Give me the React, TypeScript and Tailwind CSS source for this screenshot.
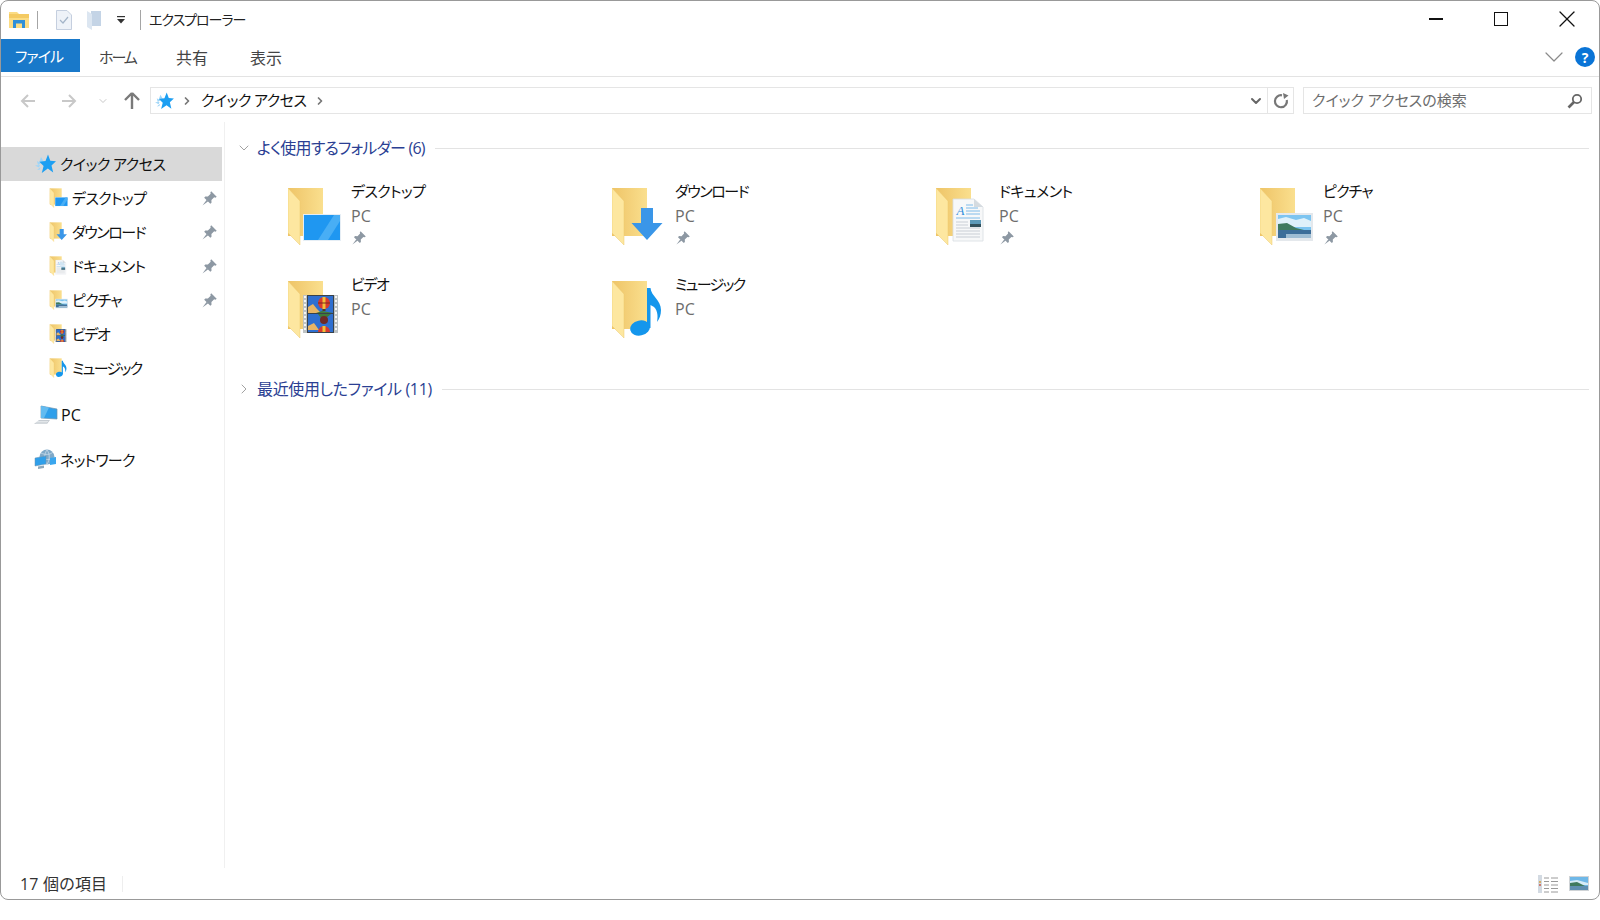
import type { ReactNode } from "react"
import { ChevronDown, ChevronRight, X } from "lucide-react"

type Kind = "desktop" | "download" | "document" | "picture" | "video" | "music"

const Pin = ({ className = "" }: { className?: string }) => (
  <svg viewBox="0 0 16 16" className={className}>
    <path d="M9.6 1.2 14.8 6.4 13.6 7.2 12.4 6.9 9.8 9.5 9.9 12 8.8 13 3 7.2 4 6.1 6.5 6.2 9.1 3.6 8.8 2.4Z" fill="#8d98a3" />
    <path d="M5.4 9.2 1.4 14.6 6.8 10.6Z" fill="#8d98a3" />
  </svg>
)

const Star = ({ className = "" }: { className?: string }) => (
  <svg viewBox="0 0 22 20" className={className}>
    <path d="M7 3 10 8 5 9ZM3 7 7 9.500 4 11ZM1 11.500 6 11 5 13.500ZM3 16 6.500 13 6 15.500Z" fill="#9ed5f8" />
    <path d="M14 0.500 16.300 6.800 22 7.200 17.500 11.400 19.200 18.500 13.800 14.600 7.800 19 9.600 12 5.400 7.800 11.500 7Z" fill="#1d9ff2" />
  </svg>
)

function Overlay({ kind }: { kind: Kind }) {
  if (kind === "desktop") {
    return (
      <g>
        <rect x="15" y="27" width="38" height="27" fill="#e6eef5" />
        <rect x="16" y="28" width="36" height="25" fill="#1f97f1" />
        <path d="M30 53 46 28H52V34L40 53Z" fill="#48aef5" />
      </g>
    )
  }
  if (kind === "download") {
    return <path d="M29 21H41V36H50.5L35 53 19.5 36H29Z" fill="#3a96e8" />
  }
  if (kind === "document") {
    return (
      <g>
        <path d="M17 12H38L47 20V54H17Z" fill="#f7f8f9" stroke="#d8dde2" strokeWidth="0.8" />
        <path d="M38 12V20H47Z" fill="#d5dbe0" />
        <text x="20.500" y="28" fontSize="13" fontStyle="italic" fontFamily="'Liberation Serif', serif" fill="#2f8fdc">A</text>
        <path d="M30 18H37M30 21H42M30 24H44M30 27H44M20 31H44" stroke="#6fb4e6" strokeWidth="0.9" />
        <path d="M20 35H32M20 38H32M20 41H44M20 44H44M20 47H44M20 50H44" stroke="#c3cad0" strokeWidth="0.9" />
        <rect x="34" y="33" width="11" height="7" fill="#5c99b8" />
        <rect x="34" y="37" width="11" height="3" fill="#31505c" />
      </g>
    )
  }
  if (kind === "picture") {
    return (
      <g>
        <rect x="16" y="26" width="37" height="28" fill="#e4e8ec" />
        <rect x="18" y="28" width="33" height="23" fill="#7cc4f0" />
        <path d="M18 32 26 30 36 33 44 31 51 34V40H18Z" fill="#dff1fa" />
        <path d="M18 37 27 36 36 41 44 43H18Z" fill="#3f7a5e" />
        <rect x="18" y="43" width="33" height="8" fill="#3d6e99" />
        <rect x="26" y="47" width="25" height="4" fill="#9fbdd3" />
      </g>
    )
  }
  if (kind === "video") {
    return (
      <g>
        <rect x="15" y="15" width="35" height="38" fill="#bfc3c4" />
        <rect x="19" y="15" width="27" height="38" fill="#39424a" />
        <rect x="20" y="16" width="25" height="17" fill="#2f6fd0" />
        <rect x="20" y="34" width="25" height="18" fill="#2f6fd0" />
        <path d="M20 27 25 24 29 29 33 33H20Z" fill="#e8b565" />
        <path d="M28 33 34 31 45 33Z" fill="#3e7a3a" />
        <circle cx="36" cy="23" r="6" fill="#d83a2e" />
        <path d="M34.500 17H37.500V29H34.500Z" fill="#f0c13a" />
        <path d="M30 23H42" stroke="#7a2b1c" strokeWidth="1" />
        <rect x="34.500" y="29" width="3" height="2" fill="#5a3a20" />
        <path d="M30 34H43L38 38H33Z" fill="#3e7a3a" />
        <circle cx="36" cy="40" r="4" fill="#6e2a26" />
        <path d="M20 46 26 43 31 50H20Z" fill="#e8b565" />
        <path d="M30 52A6 6 0 0 1 42 52Z" fill="#d83a2e" />
        <path d="M34.500 46H37.500V52H34.500Z" fill="#f0c13a" />
        <path d="M16 17H18M16 21H18M16 25H18M16 29H18M16 33H18M16 37H18M16 41H18M16 45H18M16 49H18M47 17H49M47 21H49M47 25H49M47 29H49M47 33H49M47 37H49M47 41H49M47 45H49M47 49H49" stroke="#f6f6f4" strokeWidth="2" />
      </g>
    )
  }
  return (
    <g>
      <ellipse cx="28" cy="48" rx="10" ry="7.500" fill="#1496ec" transform="rotate(-12 28 48)" />
      <path d="M35 8H38.500C39 16 49 20 49 30 49 35 47.500 39 45 42 46 37 46 31 42 27 41 26.500 39.500 25.500 38.500 25V48H35Z" fill="#1496ec" />
    </g>
  )
}

const Folder = ({ kind, className = "" }: { kind: Kind; className?: string }) => (
  <svg viewBox="0 0 54 59" className={className}>
    <defs>
      <linearGradient id="back" x1="0" x2="1" y1="0" y2="0">
        <stop offset="0" stopColor="#eec467" />
        <stop offset="1" stopColor="#fadf8e" />
      </linearGradient>
    </defs>
    <path d="M0 1H35V49H0Z" fill="url(#back)" />
    <path d="M0 1 12 14V58L0 46Z" fill="#fde7a0" stroke="#ecc86e" strokeWidth="0.5" />
    <Overlay kind={kind} />
  </svg>
)

const Pc = () => (
  <svg viewBox="0 0 24 22" className="h-[22px] w-[24px]">
    <path d="M7 2 23 5V15L7 14Z" fill="#2f9fea" stroke="#6f93ad" strokeWidth="0.7" />
    <path d="M7 2 15 3.500 10 14 7 14Z" fill="#63bbf0" />
    <path d="M5 16H16L13 20H0Z" fill="#c6ccd2" />
    <path d="M3 17.500H14M1.500 19H13" stroke="#eef1f3" strokeWidth="0.7" />
  </svg>
)

const Network = () => (
  <svg viewBox="0 0 24 22" className="h-[22px] w-[24px]">
    <circle cx="14" cy="8" r="7.500" fill="#7fa9c8" />
    <path d="M8 4C12 6 17 6 20 3M7 9C12 11 17 11 21 9M14 1C11 5 11 11 14 15M14 1C17 5 17 11 14 15" stroke="#d2e3ef" strokeWidth="0.7" fill="none" />
    <path d="M2 9 13 7V15L2 17Z" fill="#2f9fea" stroke="#6f93ad" strokeWidth="0.5" />
    <path d="M5 17.500 11 16.500V19L5 20Z" fill="#8fa8ba" />
    <path d="M17 9 23 8V15L17 16Z" fill="#3aa6ee" />
  </svg>
)

const navItems: { name: string; kind: Kind; pinned: boolean; track: string }[] = [
  { name: "デスクトップ", kind: "desktop", pinned: true, track: "tracking-[-0.66px]" },
  { name: "ダウンロード", kind: "download", pinned: true, track: "tracking-[-1.46px]" },
  { name: "ドキュメント", kind: "document", pinned: true, track: "tracking-[-0.5px]" },
  { name: "ピクチャ", kind: "picture", pinned: true, track: "tracking-[-0.9px]" },
  { name: "ビデオ", kind: "video", pinned: false, track: "tracking-[-1.4px]" },
  { name: "ミュージック", kind: "music", pinned: false, track: "tracking-[-1.66px]" },
]

function NavRow({ children, className = "" }: { children: ReactNode; className?: string }) {
  return <div className={`flex h-[34px] items-center ${className}`}>{children}</div>
}

function Sidebar() {
  return (
    <aside className="w-[224px] shrink-0 border-r border-[#f0f0f0] pt-[25px] text-[15px] text-[#111]">
      <NavRow className="mr-[2px] bg-[#d9d9d9] pl-[33px]">
        <Star className="h-[20px] w-[22px]" />
        <span className="ml-[4px] tracking-[-0.55px]">クイック アクセス</span>
      </NavRow>
      {navItems.map(item => (
        <NavRow key={item.name} className="pl-[48px]">
          <Folder kind={item.kind} className="h-[20px] w-[20px]" />
          <span className={`ml-[3px] flex-1 ${item.track}`}>{item.name}</span>
          {item.pinned && <Pin className="mr-[6px] h-[17px] w-[17px]" />}
        </NavRow>
      ))}
      <NavRow className="mt-[13px] pl-[33px]">
        <Pc />
        <span className="ml-[3px] text-[16px]">PC</span>
      </NavRow>
      <NavRow className="mt-[11px] pl-[32px]">
        <Network />
        <span className="ml-[3px] tracking-[-0.8px]">ネットワーク</span>
      </NavRow>
    </aside>
  )
}

function SectionHeader({ open, title, track }: { open: boolean; title: string; track: string }) {
  return (
    <div className="flex h-[24px] items-center">
      <div className="flex w-[22px] justify-end">
        {open ? (
          <ChevronDown className="h-[16px] w-[16px] text-[#8a8a8a]" strokeWidth={1.2} />
        ) : (
          <ChevronRight className="h-[16px] w-[16px] text-[#8a8a8a]" strokeWidth={1.2} />
        )}
      </div>
      <span className={`ml-[5px] text-[16px] text-[#2b3f93] ${track}`}>{title}</span>
      <div className="ml-[10px] mr-[10px] h-[1px] flex-1 bg-[#e3e3e3]" />
    </div>
  )
}

function FolderTile({ name, kind, pinned, track }: { name: string; kind: Kind; pinned: boolean; track: string }) {
  return (
    <div className="flex h-[93px] items-start">
      <Folder kind={kind} className="ml-[58px] mt-[8px] h-[59px] w-[54px] shrink-0" />
      <div className="ml-[9px] flex flex-col">
        <span className={`h-[25px] text-[15px] leading-[25px] text-[#111] ${track}`}>{name}</span>
        <span className="h-[25px] text-[16px] leading-[25px] text-[#6d6d6d]">PC</span>
        {pinned && <Pin className="mt-[1px] h-[16px] w-[16px]" />}
      </div>
    </div>
  )
}

function Content() {
  return (
    <main className="flex-1 pl-[5px] pt-[14px]">
      <SectionHeader open title="よく使用するフォルダー (6)" track="tracking-[-0.8px]" />
      <div className="mt-[19px] grid grid-cols-[324px_324px_324px_324px]">
        {navItems.map(item => (
          <FolderTile key={item.name} {...item} />
        ))}
      </div>
      <div className="mt-[12px]">
        <SectionHeader open={false} title="最近使用したファイル (11)" track="tracking-[-0.35px]" />
      </div>
    </main>
  )
}

function TitleBar() {
  return (
    <div className="flex h-[38px] items-center">
      <svg viewBox="0 0 20 18" className="ml-[8px] h-[18px] w-[20px]">
        <path d="M0 1H8L10 3H20V17H0Z" fill="#fbdc84" />
        <rect x="0" y="3" width="20" height="4" fill="#f4ca62" />
        <path d="M4 9H16V17H13V12.500H7V17H4Z" fill="#2f8fd8" />
      </svg>
      <div className="ml-[8px] h-[18px] w-[1px] bg-[#a5a5a5]" />
      <svg viewBox="0 0 16 20" className="ml-[18px] h-[20px] w-[16px]">
        <path d="M.5.5H11L15.500 5V19.500H.5Z" fill="#eef2f8" stroke="#c5cfdf" />
        <path d="M4 10 7 13 12 7" fill="none" stroke="#a3b4c8" strokeWidth="1.2" />
      </svg>
      <svg viewBox="0 0 14 20" className="ml-[15px] h-[20px] w-[14px]">
        <path d="M4 1H14V16H4Z" fill="#c4d4e6" />
        <path d="M0 1 5 4V20L0 17Z" fill="#dce6f1" />
      </svg>
      <svg viewBox="0 0 8 8" className="ml-[16px] h-[8px] w-[8px]">
        <rect x="0" y="0" width="8" height="1.2" fill="#333" />
        <path d="M0 3H8L4 7.500Z" fill="#333" />
      </svg>
      <div className="ml-[15px] h-[20px] w-[1px] bg-[#a5a5a5]" />
      <span className="mb-[2px] ml-[8px] text-[14px] tracking-[-1px] text-[#222]">エクスプローラー</span>
      <div className="mb-[2px] ml-auto flex items-center">
        <div className="h-[1.5px] w-[14px] bg-[#111]" />
        <div className="ml-[51px] h-[14px] w-[14px] border-[1.5px] border-[#111]" />
        <X className="ml-[45px] mr-[18px] h-[28px] w-[28px] text-[#111]" strokeWidth={1.1} />
      </div>
    </div>
  )
}

function Ribbon() {
  return (
    <div className="flex h-[38px] items-start border-b border-[#e3e3e3] pb-[3px] text-[#444]">
      <div className="flex h-[33px] w-[79px] items-center justify-center bg-[#1979ca] pr-[3px] pt-[1px] text-[15px] tracking-[-0.9px] text-white">ファイル</div>
      <span className="ml-[19px] mt-[7px] text-[15px] tracking-[-2px]">ホーム</span>
      <span className="ml-[40px] mt-[7px] text-[16px]">共有</span>
      <span className="ml-[42px] mt-[7px] text-[16px]">表示</span>
      <ChevronDown className="ml-auto mr-[5px] mt-[2px] h-[32px] w-[32px] text-[#8a8a8a]" strokeWidth={0.9} />
      <div className="mr-[4px] mt-[8px] flex h-[20px] w-[20px] items-center justify-center rounded-full bg-[#0a74d6] text-[14px] font-bold text-white">?</div>
    </div>
  )
}

function Arrow({ flip = false, color }: { flip?: boolean; color: string }) {
  return (
    <svg viewBox="0 0 16 14" className={`h-[14px] w-[16px] ${flip ? "rotate-180" : ""}`}>
      <path d="M8 1 2 7 8 13M2 7H15" fill="none" stroke={color} strokeWidth="2" />
    </svg>
  )
}

function AddressBar() {
  return (
    <div className="flex h-[45px] items-center pt-[2px]">
      <div className="ml-[19px]">
        <Arrow color="#c8c8c8" />
      </div>
      <div className="ml-[25px]">
        <Arrow flip color="#c8c8c8" />
      </div>
      <ChevronDown className="ml-[20px] h-[12px] w-[12px] text-[#c8c8c8]" strokeWidth={2} />
      <svg viewBox="0 0 16 18" className="ml-[15px] h-[18px] w-[16px]">
        <path d="M8 1 1 8M8 1 15 8M8 1V17" fill="none" stroke="#7a7a7a" strokeWidth="2.4" />
      </svg>
      <div className="ml-[10px] flex h-[27px] w-[1144px] items-center border border-[#e5e5e5]">
        <Star className="ml-[3px] h-[18px] w-[20px]" />
        <ChevronRight className="ml-[7px] h-[12px] w-[12px] text-[#777]" strokeWidth={3.5} />
        <span className="ml-[8px] text-[15px] tracking-[-0.55px] text-[#111]">クイック アクセス</span>
        <ChevronRight className="ml-[8px] h-[12px] w-[12px] text-[#777]" strokeWidth={3.5} />
        <ChevronDown className="ml-auto mr-[3px] h-[16px] w-[16px] text-[#666]" strokeWidth={3} />
        <div className="flex h-full w-[26px] items-center justify-center border-l border-[#e5e5e5]">
          <svg viewBox="0 0 16 16" className="h-[16px] w-[16px]">
            <path d="M6 2.600A6 6 0 1 0 12.500 4.200" fill="none" stroke="#777" strokeWidth="2.2" transform="rotate(30 8 8)" />
            <path d="M10 0 11 6 15.500 2.500Z" fill="#777" />
          </svg>
        </div>
      </div>
      <div className="ml-[9px] flex h-[27px] w-[289px] items-center justify-between border border-[#e5e5e5] pl-[8px] pr-[8px] text-[15px] text-[#6d6d6d]">
        <span>クイック アクセスの検索</span>
        <svg viewBox="0 0 16 16" className="h-[16px] w-[16px]">
          <circle cx="10" cy="6" r="4.200" fill="none" stroke="#666" strokeWidth="1.8" />
          <path d="M7 9 1.500 14.500" stroke="#666" strokeWidth="2.600" />
        </svg>
      </div>
    </div>
  )
}

function StatusBar() {
  return (
    <div className="flex h-[31px] items-center">
      <span className="ml-[19px] text-[16px] tracking-[0.2px] text-[#333]">17 個の項目</span>
      <div className="ml-[15px] h-[16px] w-[1px] bg-[#eeeeee]" />
      <svg viewBox="0 0 20 20" className="ml-auto h-[20px] w-[20px]">
        <rect x="0" y="1" width="4" height="18" fill="#d3dae2" />
        <path d="M6 4H11M13 4H20M6 7.500H11M13 7.500H20M6 11H11M13 11H20M6 14.500H11M13 14.500H20M6 18H11M13 18H20" stroke="#9a9a9a" strokeWidth="1" />
        <circle cx="2" cy="8" r="1" fill="#d9a13c" />
        <circle cx="2" cy="11" r="1" fill="#c85b4a" />
      </svg>
      <svg viewBox="0 0 20 15" className="ml-[11px] mr-[10px] h-[15px] w-[20px]">
        <rect width="20" height="15" fill="#cfd3d6" />
        <rect x="1" y="1" width="18" height="13" fill="#6fb8e8" />
        <path d="M1 5 8 4 19 7V9H1Z" fill="#d6ecf7" />
        <path d="M1 7 8 6 16 10H1Z" fill="#3f7a5e" />
        <rect x="1" y="10" width="18" height="4" fill="#5f8fb0" />
      </svg>
    </div>
  )
}

export default function App() {
  return (
    <div className="h-[920px] w-[1600px] overflow-hidden bg-white [font-family:'Open_Sans','Noto_Sans_CJK_JP',sans-serif] [font-feature-settings:'palt']">
      <div className="flex h-[900px] w-[1600px] flex-col rounded-[8px] border border-[#999]">
        <TitleBar />
        <Ribbon />
        <AddressBar />
        <div className="flex min-h-0 flex-1">
          <Sidebar />
          <Content />
        </div>
        <StatusBar />
      </div>
    </div>
  )
}
